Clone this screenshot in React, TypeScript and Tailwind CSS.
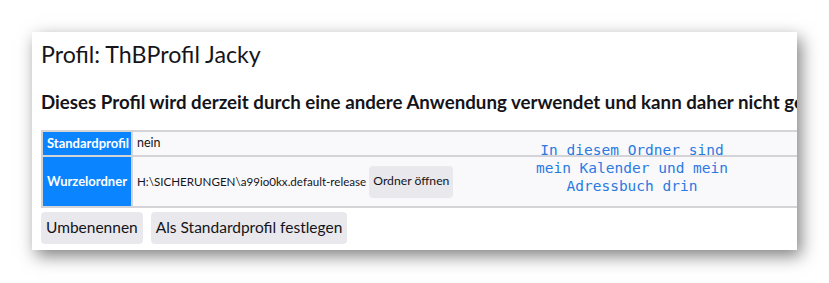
export default function App() {
  return (
    <div className="h-[283px] w-[829px] overflow-hidden bg-white pl-[32px] pt-[32px] font-['Lato',sans-serif] text-[#15141a]">
      <div className="relative h-[218px] w-[765px] overflow-hidden bg-white px-[9px] pt-[6px] shadow-[4px_6px_16px_rgba(0,0,0,0.5)]">
        <h2 className="text-[23.2px] leading-[33px]">Profil: ThBProfil Jacky</h2>

        <h3 className="mt-[18px] whitespace-nowrap text-[18.72px] font-bold leading-[26px]">
          Dieses Profil wird derzeit durch eine andere Anwendung verwendet und kann daher nicht geändert werden.
        </h3>

        <div className="mt-[15px] grid w-[800px] grid-cols-[88px_1fr] gap-[2px] bg-[#d4d4d8] p-[2px] text-[11.6px]">
          <div className="flex h-[23px] items-center bg-[#0a84ff] px-[4px] text-[13px] font-bold text-white">Standardprofil</div>
          <div className="flex items-center bg-[#f9f9fb] px-[4px] text-[12.5px]">nein</div>

          <div className="flex h-[49px] items-center bg-[#0a84ff] px-[4px] text-[13px] font-bold text-white">Wurzelordner</div>
          <div className="flex items-center gap-[3px] bg-[#f9f9fb] px-[4px] whitespace-nowrap">
            <span>H:\SICHERUNGEN\a99io0kx.default-release</span>
            <button className="h-[32px] rounded-[4px] bg-[#e9e9ed] px-[4px] text-[12.2px]">Ordner öffnen</button>
          </div>
        </div>

        <div className="mt-[4px] flex gap-[8px] text-[15.5px]">
          <button className="h-[32px] rounded-[4px] bg-[#e9e9ed] px-[5px]">Umbenennen</button>
          <button className="h-[32px] rounded-[4px] bg-[#e9e9ed] px-[5px]">Als Standardprofil festlegen</button>
        </div>

        {/* annotation drawn over the table */}
        <div className="absolute left-[480px] top-[109px] w-[240px] text-center font-['DejaVu_Sans_Mono',monospace] text-[14.5px] leading-[18px] text-[#2a7ae2]">
          In diesem Ordner sind
          <br />
          mein Kalender und mein
          <br />
          Adressbuch drin
        </div>
      </div>
    </div>
  );
}
